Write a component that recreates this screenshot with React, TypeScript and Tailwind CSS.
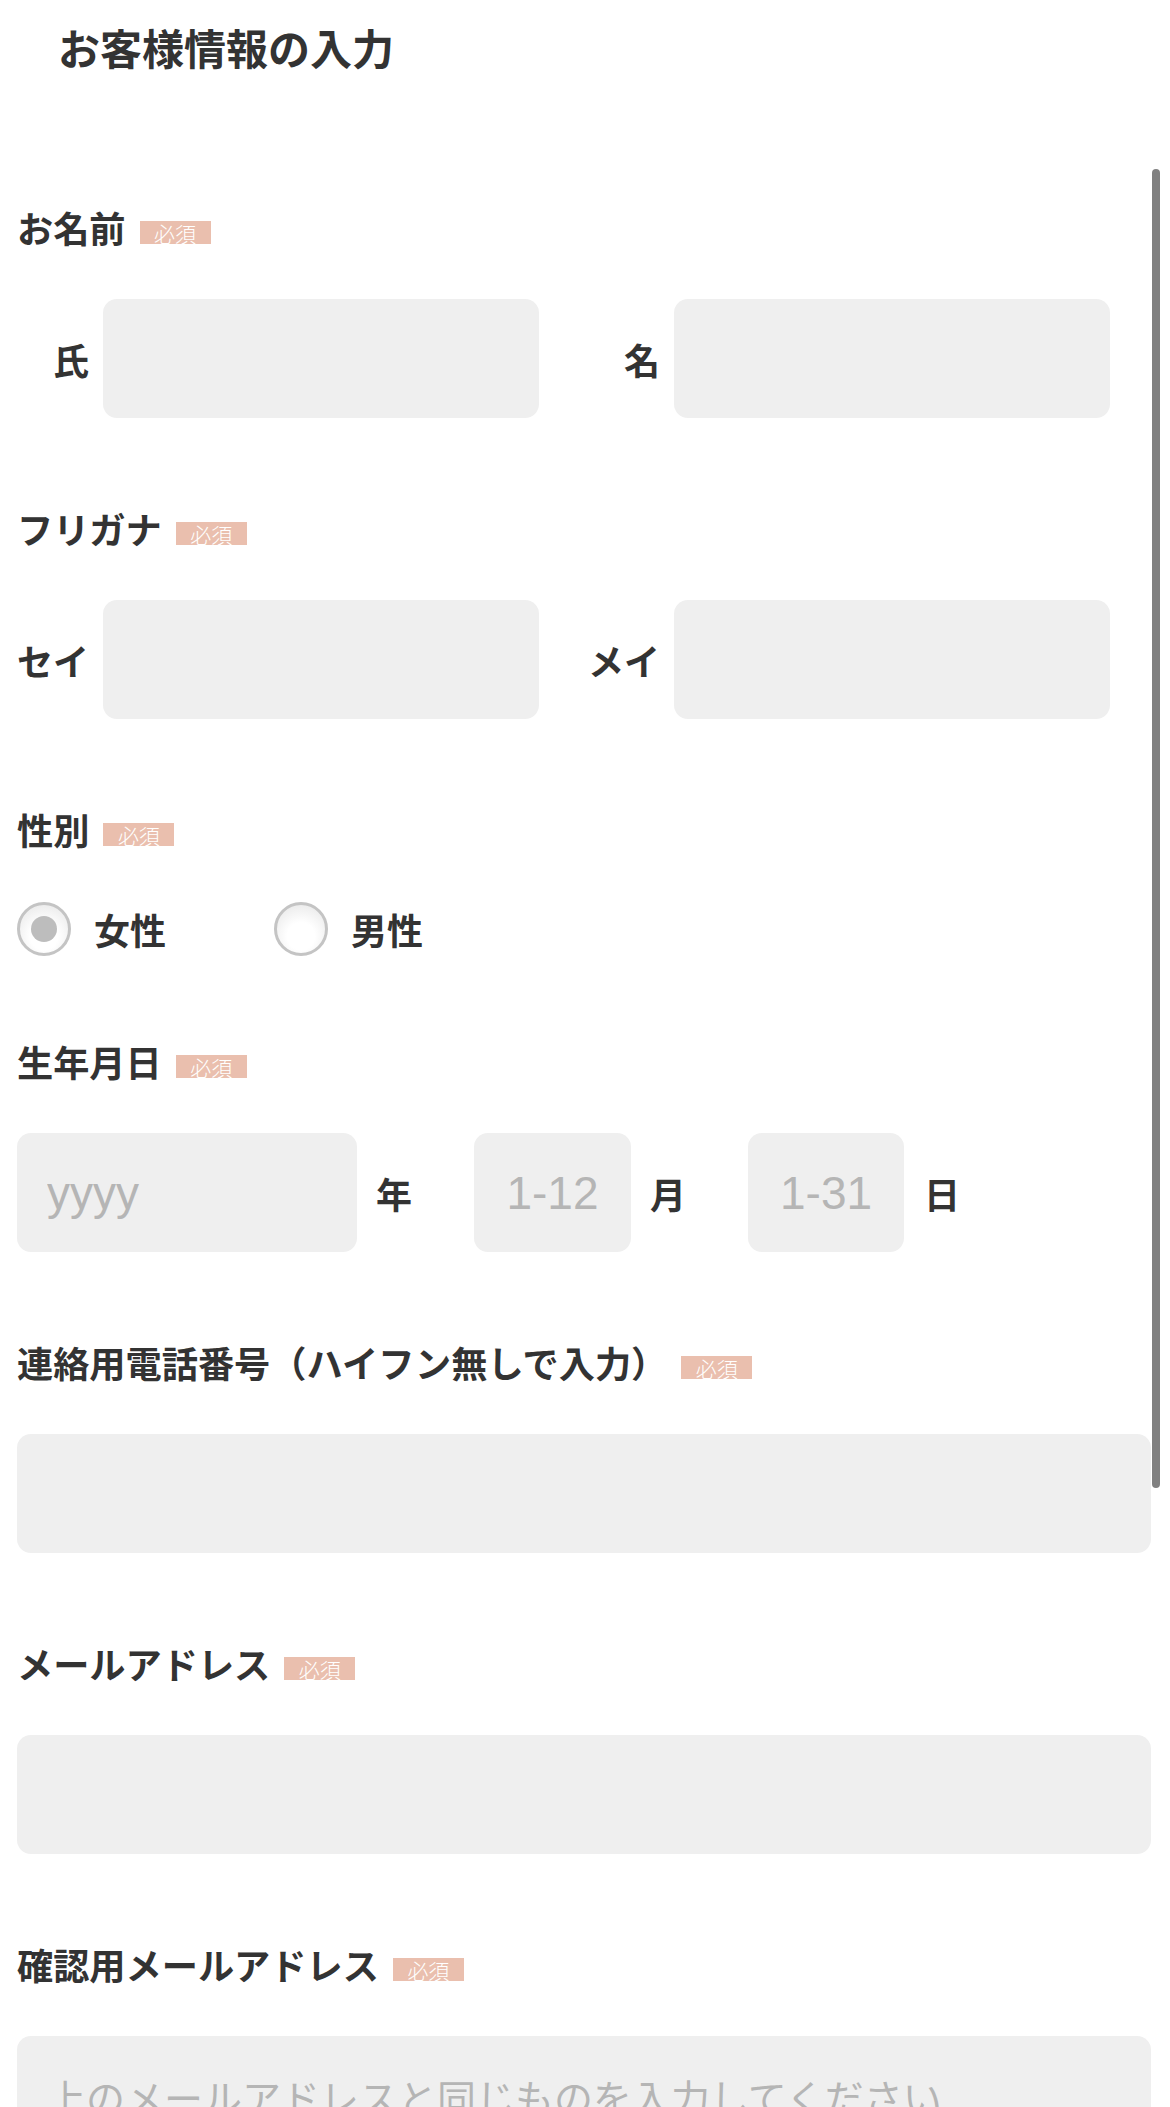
import type { ReactNode } from "react";

function Badge() {
  return (
    <span className="ml-[14px] mt-[10px] flex h-[23px] w-[71px] items-center justify-center bg-[#eabfae] pt-[2px] text-[21px] font-light leading-[21px] text-white">
      必須
    </span>
  );
}

function FieldLabel({ children }: { children: ReactNode }) {
  return (
    <div className="flex h-[54px] items-center">
      <span className="text-[36.2px] font-bold leading-[54px] text-[#333333]">{children}</span>
      <Badge />
    </div>
  );
}

function Radio({ checked, label }: { checked?: boolean; label: string }) {
  return (
    <div className="flex w-[257px] items-center">
      <span className="flex h-[54px] w-[54px] items-center justify-center rounded-full border-[3px] border-[#c4c4c4] bg-[radial-gradient(circle_at_50%_65%,#ffffff_35%,#e4e4e4_100%)]">
        {checked && <span className="h-[26px] w-[26px] rounded-full bg-[#bdbdbd]" />}
      </span>
      <span className="ml-[23px] text-[36px] font-bold leading-none text-[#333333]">{label}</span>
    </div>
  );
}

function HalfInput({ label }: { label: string }) {
  return (
    <div className="flex items-center">
      <span className="w-[86px] pr-[14px] text-right text-[36px] font-bold leading-none text-[#333333]">
        {label}
      </span>
      <input className="h-[119px] w-[436px] rounded-[14px] bg-[#efefef] outline-none" />
    </div>
  );
}

export default function App() {
  return (
    <div className="flex h-[2107px] overflow-hidden bg-white pl-[17px] pr-[10px] font-['Noto_Sans_CJK_JP',sans-serif] text-[#333333]">
      <main className="flex-1">
        {/* Header */}
        <h1 className="ml-[41px] pt-[22px] text-[42px] font-bold leading-[50px]">お客様情報の入力</h1>

        <form className="mt-[128px] flex flex-col">
          {/* Name */}
          <section>
            <FieldLabel>お名前</FieldLabel>
            <div className="mt-[45px] grid grid-cols-[571px_1fr]">
              <HalfInput label="氏" />
              <HalfInput label="名" />
            </div>
          </section>

          {/* Kana */}
          <section className="mt-[83px]">
            <FieldLabel>フリガナ</FieldLabel>
            <div className="mt-[45px] grid grid-cols-[571px_1fr]">
              <HalfInput label="セイ" />
              <HalfInput label="メイ" />
            </div>
          </section>

          {/* Gender */}
          <section className="mt-[83px]">
            <FieldLabel>性別</FieldLabel>
            <div className="mt-[46px] flex h-[54px] items-center">
              <Radio checked label="女性" />
              <Radio label="男性" />
            </div>
          </section>

          {/* Birthday */}
          <section className="mt-[78px]">
            <FieldLabel>生年月日</FieldLabel>
            <div className="mt-[45px] flex h-[119px] items-center">
              <input
                placeholder="yyyy"
                className="h-full w-[340px] rounded-[14px] bg-[#efefef] pl-[30px] font-['Liberation_Sans',sans-serif] text-[46px] outline-none placeholder:text-[#b5b5b5]"
              />
              <span className="ml-[19px] text-[36px] font-bold leading-none">年</span>
              <input
                placeholder="1-12"
                className="ml-[62px] h-full w-[157px] rounded-[14px] bg-[#efefef] text-center font-['Liberation_Sans',sans-serif] text-[46px] outline-none placeholder:text-[#b5b5b5]"
              />
              <span className="ml-[19px] text-[36px] font-bold leading-none">月</span>
              <input
                placeholder="1-31"
                className="ml-[62px] h-full w-[156px] rounded-[14px] bg-[#efefef] text-center font-['Liberation_Sans',sans-serif] text-[46px] outline-none placeholder:text-[#b5b5b5]"
              />
              <span className="ml-[20px] text-[36px] font-bold leading-none">日</span>
            </div>
          </section>

          {/* Phone */}
          <section className="mt-[83px]">
            <FieldLabel>連絡用電話番号（ハイフン無しで入力）</FieldLabel>
            <input className="mt-[45px] h-[119px] w-full rounded-[14px] bg-[#efefef] outline-none" />
          </section>

          {/* Email */}
          <section className="mt-[83px]">
            <FieldLabel>メールアドレス</FieldLabel>
            <input className="mt-[45px] h-[119px] w-full rounded-[14px] bg-[#efefef] outline-none" />
          </section>

          {/* Email confirm */}
          <section className="mt-[83px]">
            <FieldLabel>確認用メールアドレス</FieldLabel>
            <input
              placeholder="上のメールアドレスと同じものを入力してください"
              className="mt-[45px] h-[119px] w-full rounded-[14px] bg-[#efefef] pl-[30px] text-[39px] outline-none placeholder:text-[#b5b5b5]"
            />
          </section>
        </form>
      </main>

      {/* Scrollbar */}
      <aside className="ml-[1px] w-[8px]">
        <div className="mt-[169px] h-[1319px] rounded-full bg-[#808080]" />
      </aside>
    </div>
  );
}
